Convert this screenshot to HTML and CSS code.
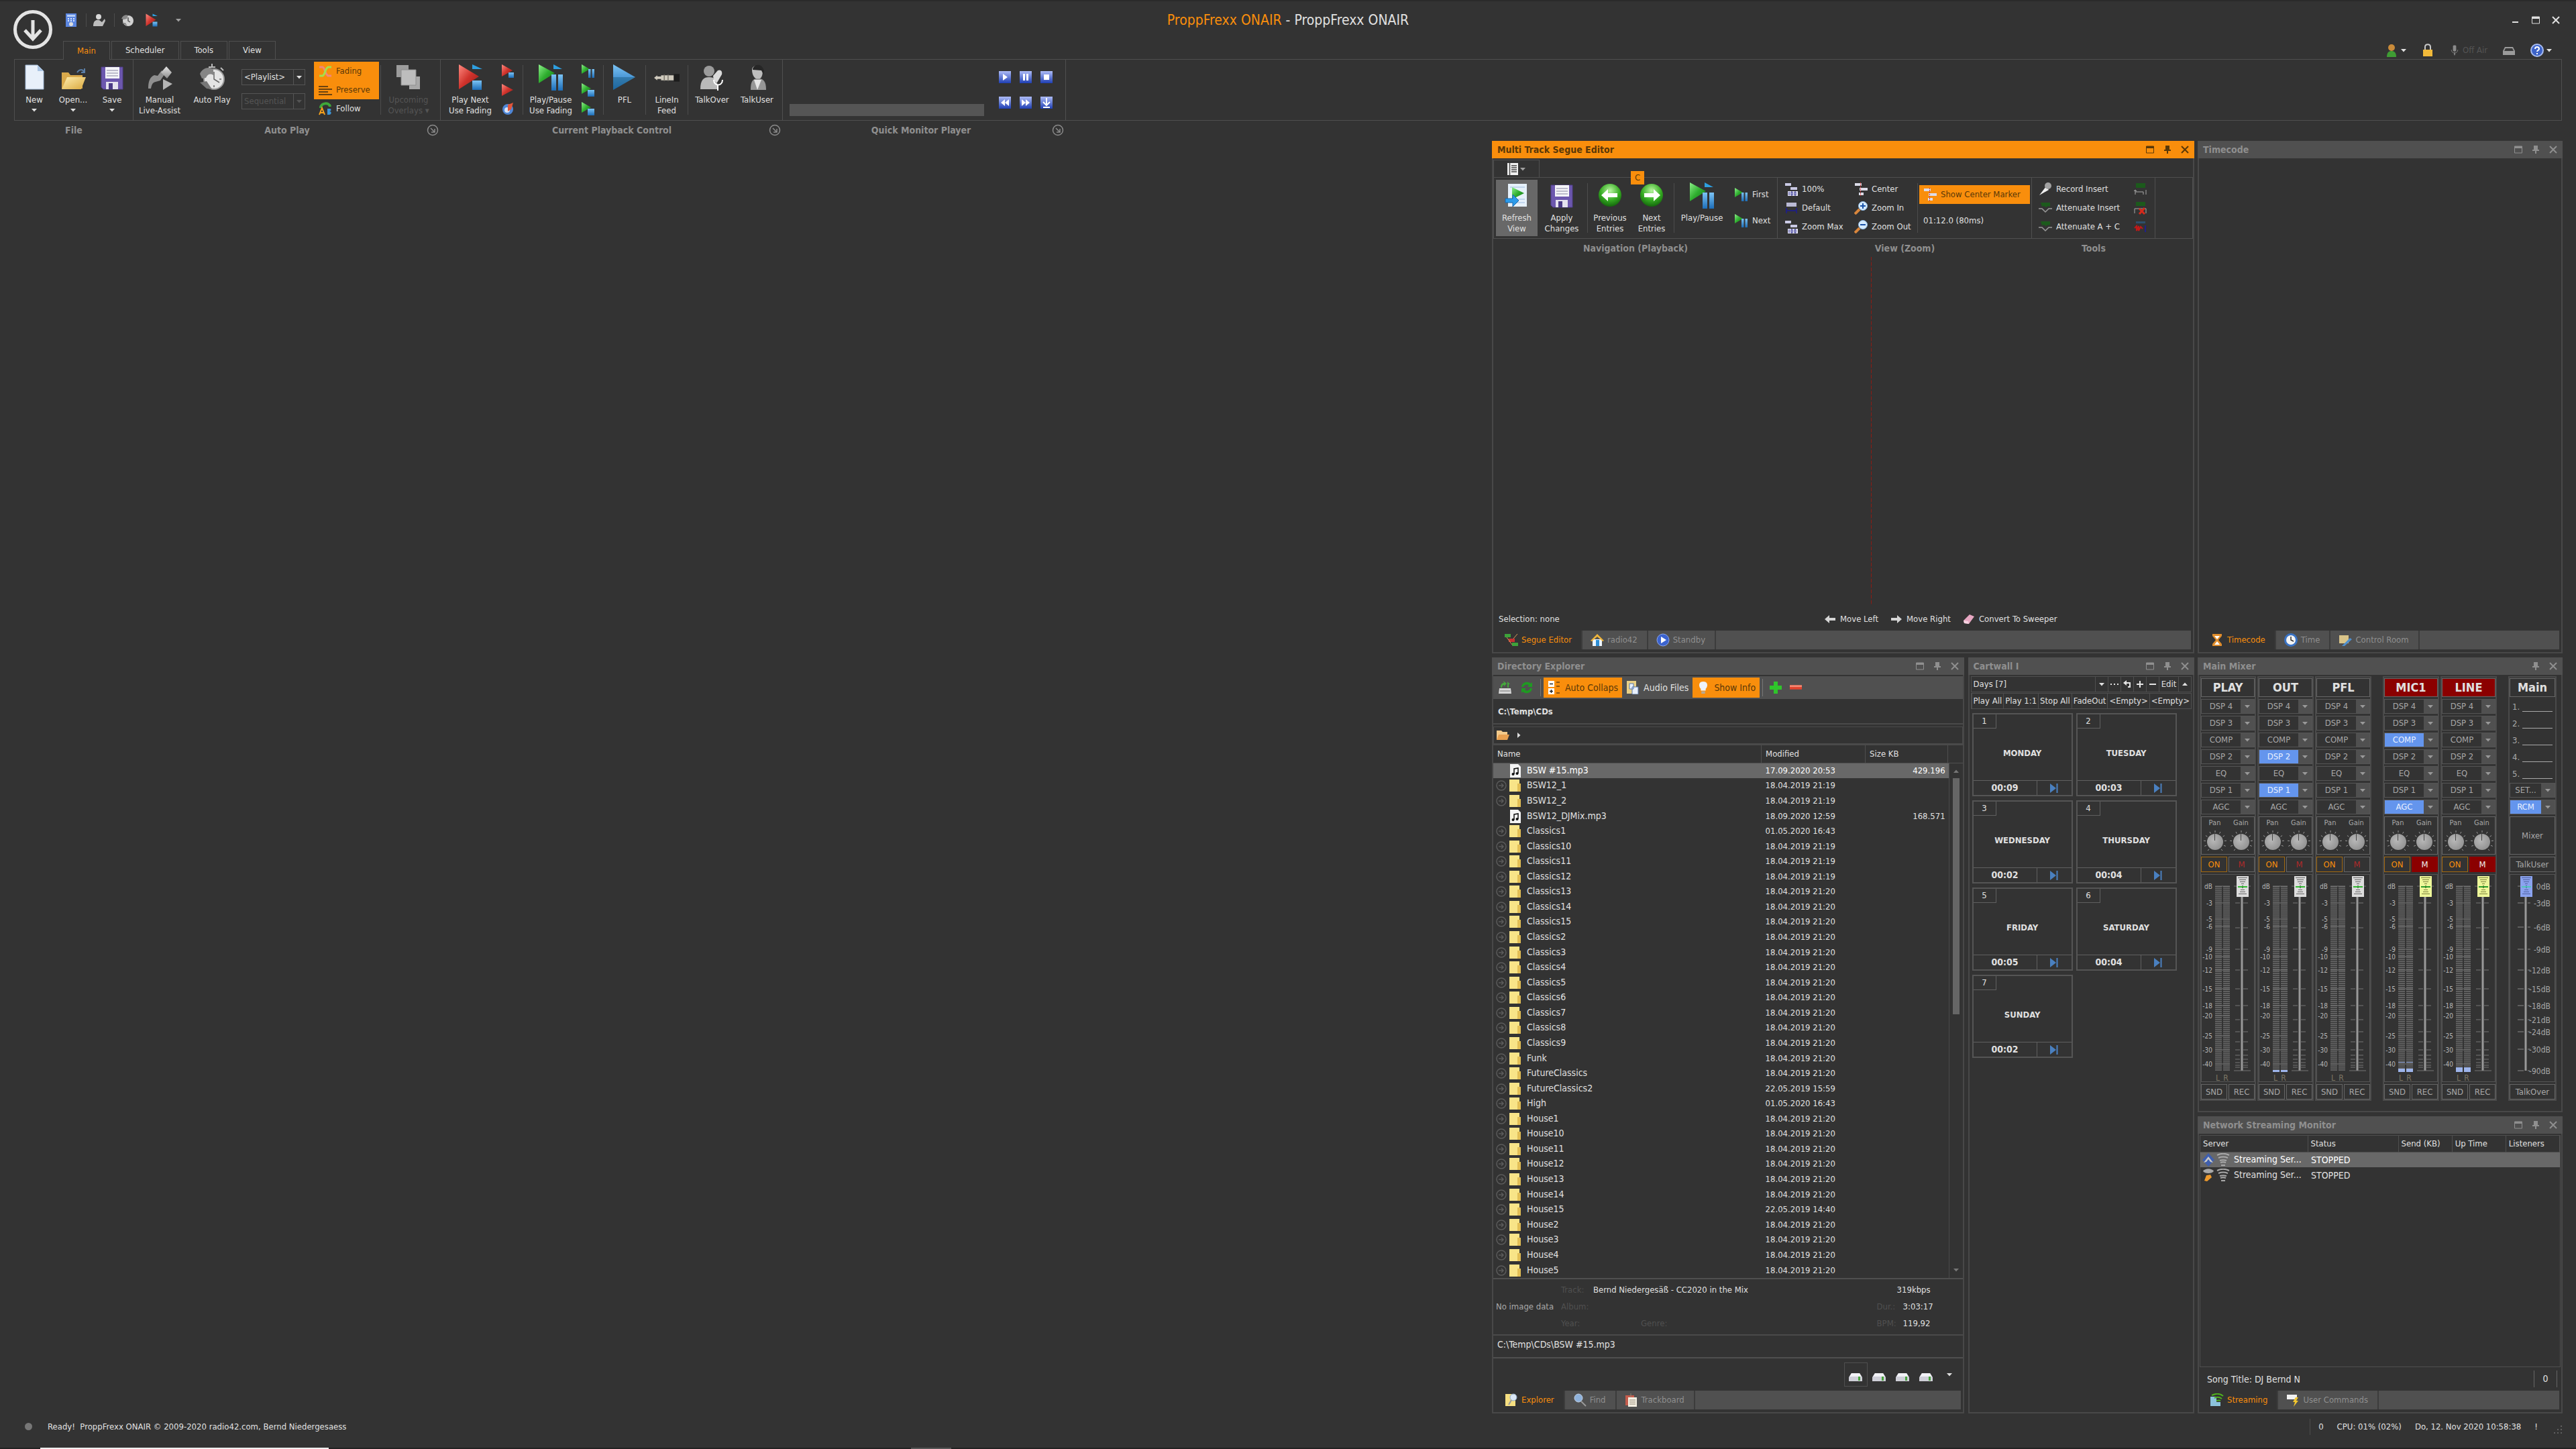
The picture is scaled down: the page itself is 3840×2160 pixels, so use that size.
FILE: index.html
```html
<!DOCTYPE html>
<html lang="en">
<head>
<meta charset="UTF-8">
<title>ProppFrexx ONAIR</title>
<link rel="stylesheet" href="styles.css">
</head>
<body>

<!-- icon sprite -->
<svg class="sprite" aria-hidden="true">
    <defs>
        <linearGradient id="gRed" x1="0" y1="0" x2="1" y2="1"><stop offset="0" stop-color="#ff8a80"/><stop offset=".5" stop-color="#d0332c"/><stop offset="1" stop-color="#8e1c18"/></linearGradient>
        <linearGradient id="gGreen" x1="0" y1="0" x2="1" y2="1"><stop offset="0" stop-color="#8df08a"/><stop offset=".5" stop-color="#2fae2f"/><stop offset="1" stop-color="#167016"/></linearGradient>
        <linearGradient id="gBlue" x1="0" y1="0" x2="0" y2="1"><stop offset="0" stop-color="#7cc4f5"/><stop offset="1" stop-color="#1c6db8"/></linearGradient>
        <linearGradient id="gGrey" x1="0" y1="0" x2="0" y2="1"><stop offset="0" stop-color="#e6e6e6"/><stop offset="1" stop-color="#8c8c8c"/></linearGradient>
        <linearGradient id="gFolder" x1="0" y1="0" x2="1" y2="1"><stop offset="0" stop-color="#ffeeb0"/><stop offset="1" stop-color="#d9a83c"/></linearGradient>
        <linearGradient id="gBtn" x1="0" y1="0" x2="0" y2="1"><stop offset="0" stop-color="#aebcf7"/><stop offset="1" stop-color="#1f3fb4"/></linearGradient>
        <radialGradient id="gBall" cx=".5" cy=".3" r=".7"><stop offset="0" stop-color="#b8f5a0"/><stop offset=".6" stop-color="#35ab22"/><stop offset="1" stop-color="#14660c"/></radialGradient>
    </defs>
    <symbol id="logo" viewBox="0 0 58 58"><circle cx="29" cy="29" r="26.5" fill="none" stroke="#e4e4e4" stroke-width="5"/><path d="M29 15v27M17 30l12 13 12-13" fill="none" stroke="#e4e4e4" stroke-width="5"/></symbol>
    <symbol id="caret" viewBox="0 0 8 8"><path d="M0 2h8L4 6.500z" fill="currentColor"/></symbol>
    <symbol id="launcher" viewBox="0 0 18 18"><circle cx="9" cy="9" r="7.500" fill="none" stroke="#8a8a8a" stroke-width="1.500"/><path d="M6 6l6 6M12 7v5H7" fill="none" stroke="#8a8a8a" stroke-width="1.500"/></symbol>
    <symbol id="new" viewBox="0 0 38 38"><path d="M6 1h18l9 9v27H6z" fill="#e8f0fa" stroke="#9fb6d3"/><path d="M24 1v9h9z" fill="#a9c3e2"/></symbol>
    <symbol id="open" viewBox="0 0 38 38"><path d="M2 12h10l3 4h18v20H2z" fill="#d9a94b"/><path d="M2 37l8-18h28l-7 18z" fill="url(#gFolder)"/><path d="M25 12c3-5 8-5 10-1M36 6v6h-5" fill="none" stroke="#5b7fa8" stroke-width="2"/></symbol>
    <symbol id="save" viewBox="0 0 38 38"><path d="M3 4h32v33H6l-3-3z" fill="#6c57ae" stroke="#51408c"/><path d="M9 4h21v17H9z" fill="#f4f4f8"/><path d="M11 9h17M11 13h17M11 17h17" stroke="#aaa9bd" stroke-width="1.500"/><path d="M10 26h18v11H10z" fill="#e4e2ee"/><path d="M14 28h6v9h-6z" fill="#4a3a86"/></symbol>
    <symbol id="manual" viewBox="0 0 38 38"><path d="M2 36c0-10 2-17 9-20l5 1 6-8 4 6-6 9-7 2c-5 1-6 5-7 10z" fill="#8f8f8f"/><path d="M29 3l8 9-7 9-9-9z" fill="url(#gGrey)"/><path d="M24 22l14 7-14 9z" fill="#b4b4b4"/></symbol>
    <symbol id="auto" viewBox="0 0 38 40"><path d="M19 0v6M14 5h10M32 6l4 4" stroke="#bbb" stroke-width="2"/><circle cx="22" cy="23" r="15" fill="#e4e4e4" stroke="#999" stroke-width="2"/><path d="M22 12v11l8 5M22 35v-3M33 23h-3" fill="none" stroke="#666" stroke-width="1.500"/><path d="M1 15C5 6 14 4 21 8v9c-5-3-9-1-11 4l-6 1z" fill="#858585"/><path d="M1 28l10-2 8 12-8-1z" fill="#777"/></symbol>
    <symbol id="fade" viewBox="0 0 20 20"><path d="M1 4h5c4 2 3 10 8 13h5" fill="none" stroke="#f2867c" stroke-width="3"/><path d="M1 17h5c4-2 3-10 8-13h5" fill="none" stroke="#a6e04a" stroke-width="3"/></symbol>
    <symbol id="lines" viewBox="0 0 20 20"><path d="M0 5h14M0 9h20M0 13h14M0 17h20" stroke="#6b4310" stroke-width="2"/></symbol>
    <symbol id="follow" viewBox="0 0 20 20"><path d="M3 9c0-8 13-9 14-2" fill="none" stroke="#3ea83a" stroke-width="4"/><path d="M1 19l4-10 4 10M2 16h6" fill="none" stroke="#f6a11c" stroke-width="2"/><path d="M13 10h4c3 1 1 4-1 4 4 0 3 5 0 5h-3z" fill="#3d95d8"/></symbol>
    <symbol id="overlays" viewBox="0 0 38 38"><path d="M20 18h16v19H20z" fill="#a8a8a8"/><path d="M1 1h18v18H1z" fill="#9c9c9c"/><path d="M8 8h22v23H8z" fill="#bdbdbd" stroke="#8d8d8d"/></symbol>
    <symbol id="playnext" viewBox="0 0 38 40"><path d="M2 1l30 18L2 38z" fill="url(#gRed)"/><path d="M22 1l15 7H22z" fill="#2e9fe0"/><path d="M22 25h14v14H22z" fill="url(#gBlue)"/></symbol>
    <symbol id="redplay" viewBox="0 0 20 20"><path d="M1 1l17 9-17 9z" fill="url(#gRed)"/></symbol>
    <symbol id="redstop" viewBox="0 0 20 20"><path d="M1 0l16 9L1 18z" fill="url(#gRed)"/><path d="M11 12h8v8h-8z" fill="url(#gBlue)"/></symbol>
    <symbol id="eject" viewBox="0 0 20 20"><circle cx="10" cy="11" r="8" fill="#4f86d6"/><circle cx="9" cy="12" r="4" fill="#d8e6fa"/><path d="M10 4l8-3-3 10-5 3z" fill="#e2553a"/></symbol>
    <symbol id="playpause" viewBox="0 0 38 40"><path d="M1 1l24 13L1 29z" fill="url(#gGreen)"/><path d="M23 1l13 7H23z" fill="#2e9fe0"/><path d="M20 16h7v24h-7zM30 16h7v24h-7z" fill="url(#gBlue)"/></symbol>
    <symbol id="gpause" viewBox="0 0 20 20"><path d="M0 0l12 7L0 14z" fill="url(#gGreen)"/><path d="M10 7h3.500v13H10zM15.500 7H19v13h-3.500z" fill="url(#gBlue)"/></symbol>
    <symbol id="gstop" viewBox="0 0 20 20"><path d="M0 0l14 8L0 16z" fill="url(#gGreen)"/><path d="M9 10h10v10H9z" fill="url(#gBlue)"/></symbol>
    <symbol id="pfl" viewBox="0 0 38 40"><path d="M2 1l33 19L2 39z" fill="url(#gBlue)"/><path d="M2 20h33L2 39z" fill="#1e5f86" opacity=".5"/></symbol>
    <symbol id="jack" viewBox="0 0 40 38"><path d="M0 20l5-4v2h6v-2h20v8H11v-2H5v2z" fill="#cfcabd"/><path d="M16 15v10M22 15v10" stroke="#77736a" stroke-width="1.500"/><path d="M31 14h9v12h-9z" fill="#1c1c1c"/></symbol>
    <symbol id="talkover" viewBox="0 0 38 40"><circle cx="14" cy="11" r="8" fill="#9b9b9b"/><path d="M1 38c0-14 5-18 13-18s13 4 13 18z" fill="#b9b9b9"/><path d="M20 18l7-8c5-2 7 2 6 6l-7 12-5-3z" fill="#dadada"/><path d="M21 24c0 10 13 10 13 0M27 32v8" fill="none" stroke="#fff" stroke-width="2"/></symbol>
    <symbol id="talkuser" viewBox="0 0 38 40"><path d="M11 9c0-8 15-8 16 1 0 7-2 13-7 13s-9-6-9-14z" fill="#bdbdbd"/><path d="M12 9c0-8 14-12 17 2l-1 5-3-6z" fill="#262626"/><path d="M9 39c0-13 3-17 11-17s12 4 12 17z" fill="#969696"/><path d="M14 24l5 15 6-15z" fill="#e6e6e6"/></symbol>
    <symbol id="qplay" viewBox="0 0 18 18"><path d="M0 0h18v18H0z" fill="url(#gBtn)"/><path d="M6 4l7 5-7 5z" fill="#fff"/></symbol>
    <symbol id="qpause" viewBox="0 0 18 18"><path d="M0 0h18v18H0z" fill="url(#gBtn)"/><path d="M5 4h3v10H5zM10 4h3v10h-3z" fill="#fff"/></symbol>
    <symbol id="qstop" viewBox="0 0 18 18"><path d="M0 0h18v18H0z" fill="url(#gBtn)"/><path d="M5 5h8v8H5z" fill="#fff"/></symbol>
    <symbol id="qrew" viewBox="0 0 18 18"><path d="M0 0h18v18H0z" fill="url(#gBtn)"/><path d="M9 4v10L3 9zM15 4v10L9 9z" fill="#fff"/></symbol>
    <symbol id="qfwd" viewBox="0 0 18 18"><path d="M0 0h18v18H0z" fill="url(#gBtn)"/><path d="M3 4v10l6-5zM9 4v10l6-5z" fill="#fff"/></symbol>
    <symbol id="qdown" viewBox="0 0 18 18"><path d="M0 0h18v18H0z" fill="url(#gBtn)"/><path d="M9 2v10M4 8l5 5 5-5M4 16h10" fill="none" stroke="#fff" stroke-width="2"/></symbol>
    <symbol id="calc" viewBox="0 0 20 20"><path d="M2 0h16v20H2z" fill="#5b86e0"/><path d="M4 2h12v3H4z" fill="#b5cdf6"/><path d="M5 8h10M5 11h10" stroke="#dce8ff" stroke-width="2" stroke-dasharray="2 2"/><circle cx="10" cy="16" r="3" fill="#ddd"/></symbol>
    <symbol id="person" viewBox="0 0 20 20"><circle cx="9" cy="5" r="4" fill="#d8d8d8"/><path d="M1 19c0-8 4-10 9-9l4 3 4-5 1 3-4 8z" fill="#bdbdbd"/></symbol>
    <symbol id="clockauto" viewBox="0 0 20 20"><circle cx="11" cy="11" r="8" fill="#d2d2d2"/><path d="M11 6v5l3 2" fill="none" stroke="#555" stroke-width="1.500"/><path d="M1 8c2-5 6-7 10-5l-2 5-4 1zM2 14l5 0 3 5z" fill="#8a8a8a"/></symbol>
    <symbol id="max" viewBox="0 0 12 12"><path d="M.5 1h11v10H.5z" fill="none" stroke="currentColor"/><path d="M0 1h12v3H0z" fill="currentColor"/></symbol>
    <symbol id="min" viewBox="0 0 12 12"><path d="M1 8h9v2H1z" fill="currentColor"/></symbol>
    <symbol id="pin" viewBox="0 0 12 12"><path d="M3 0h6v6h2v2H1V6h2zM5 8h2v4H5z" fill="currentColor"/></symbol>
    <symbol id="close" viewBox="0 0 12 12"><path d="M1 1l10 10M11 1L1 11" stroke="currentColor" stroke-width="2"/></symbol>
    <symbol id="user" viewBox="0 0 20 20"><circle cx="10" cy="6" r="5" fill="#c98b3a"/><path d="M3 20c0-7 3-9 7-9s7 2 7 9z" fill="#3f9c34"/></symbol>
    <symbol id="lock" viewBox="0 0 20 20"><path d="M6 9V5c0-5 8-5 8 0v4" fill="none" stroke="#c9c9c9" stroke-width="2"/><path d="M3 9h14v10H3z" fill="#f1b93a"/></symbol>
    <symbol id="mic" viewBox="0 0 20 20"><path d="M7 2c0-2 6-2 6 0v8c0 3-6 3-6 0zM9 14h2v5H9z" fill="#8b8b8b"/><path d="M4 9c0 8 12 8 12 0" fill="none" stroke="#8b8b8b"/></symbol>
    <symbol id="car" viewBox="0 0 20 20"><path d="M4 5h12l3 6v6H1v-6z" fill="#9a9a9a"/><path d="M5 7h10l2 4H3z" fill="#3a3a3a"/></symbol>
    <symbol id="help" viewBox="0 0 20 20"><circle cx="10" cy="10" r="9" fill="#3d63c8" stroke="#a9bdf0" stroke-width="2"/><path d="M7 8c0-4 6-4 6 0 0 2-3 2-3 4M10 14v2" fill="none" stroke="#fff" stroke-width="2"/></symbol>
    <symbol id="menu" viewBox="0 0 16 18"><path d="M0 0h16v18H0z" fill="#f0f0f0"/><path d="M3.500 0v18M6 4h8M6 7h8M6 10h8M6 13h8" stroke="#444" stroke-width="1.500"/></symbol>
    <symbol id="refreshview" viewBox="0 0 38 38"><path d="M6 2h28v34H6z" fill="#e6f1fb"/><path d="M9 7h22M9 25h22M9 30h22" stroke="#9dbbe0"/><path d="M12 7l18 9-18 9z" fill="url(#gGreen)"/><path d="M2 24h11v-6l9 9-9 9v-6H2z" fill="#2c9bea" stroke="#1767ac"/></symbol>
    <symbol id="prev" viewBox="0 0 38 38"><circle cx="19" cy="19" r="17" fill="url(#gBall)"/><path d="M6 19l10-9v6h14v6H16v6z" fill="#fff"/></symbol>
    <symbol id="next" viewBox="0 0 38 38"><circle cx="19" cy="19" r="17" fill="url(#gBall)"/><path d="M32 19l-10-9v6H8v6h14v6z" fill="#fff"/></symbol>
    <symbol id="z100" viewBox="0 0 20 20"><path d="M1 1h9v4H1zM9 7h10v4H9z" fill="#c9c9e4"/><path d="M5 13h15v7H5z" fill="#e5e5f5"/><path d="M7 14v5M10 14v5h2v-5zM15 14v5h2v-5z" fill="none" stroke="#26268a"/></symbol>
    <symbol id="zdef" viewBox="0 0 20 20"><path d="M3 2h15v6H3z" fill="#b9b9d4"/><path d="M3 10v8M18 10v8M3 14h15" stroke="#20207c" stroke-width="2"/></symbol>
    <symbol id="center" viewBox="0 0 20 20"><path d="M1 1h10v4H1zM8 8h12v4H8zM7 15h7v4H7z" fill="#dcdce8"/><path d="M9.500 0v20" stroke="#d13a3a" stroke-dasharray="2 1"/></symbol>
    <symbol id="zin" viewBox="0 0 20 20"><path d="M1 19l7-7" stroke="#d9863c" stroke-width="4"/><circle cx="13" cy="7" r="6.500" fill="#d5ebff" stroke="#8fb8e2"/><path d="M9 7h8M13 3v8" stroke="#1952a8" stroke-width="2"/></symbol>
    <symbol id="zout" viewBox="0 0 20 20"><path d="M1 19l7-7" stroke="#d9863c" stroke-width="4"/><circle cx="13" cy="7" r="6.500" fill="#d5ebff" stroke="#8fb8e2"/><path d="M9 7h8" stroke="#1952a8" stroke-width="2"/></symbol>
    <symbol id="record" viewBox="0 0 20 20"><path d="M1 19l10-13 4 5z" fill="#f0f0f0"/><circle cx="14" cy="5" r="5" fill="#a2a2a2"/></symbol>
    <symbol id="atten" viewBox="0 0 20 20"><path d="M3 2h14v6l-3-1-3 2-3-2-3 1z" fill="#1c5a1c"/><path d="M0 11h5l5 5 5-5h5" fill="none" stroke="#9a9a9a" stroke-width="1.500"/></symbol>
    <symbol id="ins1" viewBox="0 0 20 20"><path d="M3 1h14v7H3z" fill="#1c5a1c"/><path d="M2 18v-7M0 13l2-2 2 2M2 14h12v4M18 18v-7" fill="none" stroke="#aaa"/></symbol>
    <symbol id="ins2" viewBox="0 0 20 20"><path d="M3 1h14v6H3z" fill="#1c5a1c"/><path d="M1 18v-7h17v7" fill="none" stroke="#aaa"/><path d="M8 11l8 8M16 10l-8 9" stroke="#d62a1c" stroke-width="3"/></symbol>
    <symbol id="ins3" viewBox="0 0 20 20"><path d="M3 2h14v3H3z" fill="#2d4f6c"/><path d="M1 12l3-3v7l3-7v7l3-6 3 3" fill="none" stroke="#c01818" stroke-width="2"/><path d="M17 8v10" stroke="#20208a" stroke-width="2"/></symbol>
    <symbol id="aleft" viewBox="0 0 18 18"><path d="M1 9l7-6v4h9v4H8v4z" fill="#d6d6d6"/></symbol>
    <symbol id="aright" viewBox="0 0 18 18"><path d="M17 9l-7-6v4H1v4h9v4z" fill="#d6d6d6"/></symbol>
    <symbol id="eraser" viewBox="0 0 18 18"><path d="M1 11l9-9 7 3-8 11-7-1z" fill="#e7a7c2"/><path d="M1 11l7 1 1 4-7-1z" fill="#f6d3e1"/></symbol>
    <symbol id="segue" viewBox="0 0 20 20"><path d="M0 1h9v5H0zM11 14h9v5h-9z" fill="#3da23a"/><path d="M6 8h9v5H6z" fill="#c53232"/><path d="M3 6l8 11M19 1l-6 7" stroke="#d69a5a"/></symbol>
    <symbol id="home" viewBox="0 0 20 20"><path d="M3 9h14v10H3z" fill="#eef6ff"/><path d="M0 11L10 1l10 10-2 1-8-7-8 7z" fill="#f0b53a"/><path d="M8 10h5v9H8z" fill="#2e8fd6"/></symbol>
    <symbol id="standby" viewBox="0 0 20 20"><circle cx="10" cy="10" r="9" fill="#3b63cf" stroke="#8ca6ea"/><path d="M7 5l8 5-8 5z" fill="#fff"/></symbol>
    <symbol id="timer" viewBox="0 0 20 20"><circle cx="10" cy="10" r="8.500" fill="#f4f4f4" stroke="#3a73c4" stroke-width="3"/><path d="M10 5v5l4 2" fill="none" stroke="#333" stroke-width="1.500"/></symbol>
    <symbol id="glass" viewBox="0 0 20 20"><path d="M3 1h14v3l-5 6 5 6v3H3v-3l5-6-5-6z" fill="#e08d2c"/><path d="M6 4h8l-4 5zM10 12l4 5H6z" fill="#fff"/></symbol>
    <symbol id="control" viewBox="0 0 20 20"><path d="M1 3h14v12H1z" fill="#d9c489"/><path d="M5 19L17 7l3 2L9 19z" fill="#4e8fd0"/></symbol>
    <symbol id="driveref" viewBox="0 0 20 20"><path d="M1 11h17l1 8H0z" fill="#d6d6d6"/><path d="M2 15h15" stroke="#777"/><path d="M3 10c0-5 2-7 5-7l-1-3 5 4-4 4V6c-2 0-3 2-3 4zM13 10V1l4 4h-2v5z" fill="#44a83c"/></symbol>
    <symbol id="sync" viewBox="0 0 20 20"><path d="M2 9c1-8 10-9 14-5l2-2v7h-7l2-2c-3-3-7-1-8 2zM18 11c-1 8-10 9-14 5l-2 2v-7h7l-2 2c3 3 7 1 8-2z" fill="#1f9a22"/></symbol>
    <symbol id="tree" viewBox="0 0 18 20"><path d="M0 0h9v9H0zM0 11h9v9H0z" fill="#fff"/><path d="M2 4.500h5M2 15.500h5M4.500 13v5" stroke="#222" stroke-width="1.500"/><path d="M12 2h5M12 8h5M12 18h5" stroke="#6b4310" stroke-width="1.500"/></symbol>
    <symbol id="audiofile" viewBox="0 0 20 20"><path d="M1 0h14v19H1z" fill="#e8cf86"/><path d="M5 4h6v8H5zM9 9h9v11H9z" fill="#e9f0fb" stroke="#5577ad"/></symbol>
    <symbol id="bulb" viewBox="0 0 16 22"><path d="M8 1c8 0 8 8 4 12v3H4v-3C0 9 0 1 8 1z" fill="#eef2fa"/><path d="M5 17h6v4H5z" fill="#b9a992"/></symbol>
    <symbol id="plus" viewBox="0 0 18 18"><path d="M6 0h6v6h6v6h-6v6H6v-6H0V6h6z" fill="#2fc52b"/></symbol>
    <symbol id="minus" viewBox="0 0 20 18"><path d="M0 5h20v7H0z" fill="#e0432e"/><path d="M0 5h20v3H0z" fill="#f38a75"/></symbol>
    <symbol id="crumb" viewBox="0 0 20 16"><path d="M1 1h7l2 2h7v12H1z" fill="#f2c98a"/><path d="M1 15l3-8h16l-3 8z" fill="#e8a050"/></symbol>
    <symbol id="folder" viewBox="0 0 18 20"><path d="M0 1h15v18H0z" fill="#f8e488"/><path d="M12 7h5v12h-5z" fill="#e2be55"/></symbol>
    <symbol id="file" viewBox="0 0 18 20"><path d="M1 0h12l4 4v16H1z" fill="#f4f4f4"/><path d="M7 15V7l6-1v8" fill="none" stroke="#111" stroke-width="1.500"/><circle cx="5.500" cy="15" r="2" fill="#111"/><circle cx="11.500" cy="14" r="2" fill="#111"/></symbol>
    <symbol id="expand" viewBox="0 0 16 16"><circle cx="8" cy="8" r="7" fill="none" stroke="#5b5b5b" stroke-width="1.500"/><path d="M4 8h7M8 5l3 3-3 3" fill="none" stroke="#5b5b5b" stroke-width="1.500"/></symbol>
    <symbol id="drive" viewBox="0 0 20 14"><path d="M4 1h12l4 6v6H0V7z" fill="#cfcfd8"/><path d="M4 1h12l3 5H1z" fill="#f2f2f6"/><path d="M14 6h3v6h-3z" fill="#47a33c"/></symbol>
    <symbol id="explorer" viewBox="0 0 18 20"><path d="M0 1h15v18H0z" fill="#f6df80"/><circle cx="12" cy="6" r="5" fill="#dbe8f6" stroke="#8fa8c4"/><path d="M9 10l-4 7" stroke="#9a9a9a" stroke-width="2"/></symbol>
    <symbol id="find" viewBox="0 0 20 20"><circle cx="8" cy="7" r="6" fill="#8fb2dc" stroke="#c4d2e4"/><path d="M12 12l7 7" stroke="#999" stroke-width="2"/></symbol>
    <symbol id="board" viewBox="0 0 18 20"><path d="M0 3h13v15H0z" fill="#c45c4c"/><path d="M4 6h13v14H4z" fill="#f4efe2"/><path d="M6 10h9M6 13h9M6 16h9M8 0v6" stroke="#8d8271"/></symbol>
    <symbol id="stream" viewBox="0 0 20 20"><path d="M0 5h9v14H0zM9 13h6v6H9z" fill="#8cc3dc"/><path d="M2 3c6-3 12-3 17 1M6 7c4-2 7-2 11 1M9 11c3-1 4-1 6 0" fill="none" stroke="#4eb01e" stroke-width="2"/></symbol>
    <symbol id="command" viewBox="0 0 18 20"><path d="M0 2h15v7H0z" fill="#f1f1f1"/><path d="M13 6l4 0-3 5h3l-7 9 2-7H9z" fill="#f2c62e"/></symbol>
    <symbol id="skip" viewBox="0 0 12 14"><path d="M0 0l9 7-9 7z" fill="#4a80c0"/><path d="M9.500 0h2v14h-2z" fill="#4a80c0"/></symbol>
    <symbol id="undo" viewBox="0 0 12 12"><path d="M5 0L0 4l5 4V5h4v4H7v2h4V3H5z" fill="#e4e4e4"/></symbol>
    <symbol id="dots" viewBox="0 0 12 12"><path d="M0 5h2v2H0zM5 5h2v2H5zM10 5h2v2h-2z" fill="#e4e4e4"/></symbol>
    <symbol id="add" viewBox="0 0 12 12"><path d="M5 1h2v4h4v2H7v4H5V7H1V5h4z" fill="#e4e4e4"/></symbol>
    <symbol id="sub" viewBox="0 0 12 12"><path d="M1 5h10v2H1z" fill="#e4e4e4"/></symbol>
    <symbol id="srvA" viewBox="0 0 18 20"><path d="M9 0l9 10-9 10-9-10z" fill="#3f5fae"/><path d="M2 14l7-9 7 9-4-1-3-4-3 4z" fill="#c9c9c9"/></symbol>
    <symbol id="srvB" viewBox="0 0 18 20"><path d="M1 4c3-5 13-5 16 0-3 4-13 4-16 0z" fill="#a8a8a8"/><path d="M6 10l6-1 2 4-7 6-4-1z" fill="#ee9a2c"/></symbol>
    <symbol id="wifi" viewBox="0 0 20 20"><path d="M1 3c6-3 12-3 18 0M3 7c5-2 9-2 14 0M5 11c3-1 7-1 10 0M6 14c3-1 5-1 8 0M7 18h6" fill="none" stroke="#a9a9a9" stroke-width="2"/></symbol>
    <symbol id="grip" viewBox="0 0 14 14"><path d="M11 1h2v2h-2zM11 6h2v2h-2zM6 6h2v2H6zM11 11h2v2h-2zM6 11h2v2H6zM1 11h2v2H1z" fill="#606060"/></symbol>
</svg>

<header class="titlebar">
    <button class="app-btn" aria-label="Application menu"><svg class="logo"><use href="#logo"/></svg></button>
    <div class="titlebar-main">
        <div class="title-row">
            <div class="qat">
                <button aria-label="Mixer"><svg class="i20"><use href="#calc"/></svg></button>
                <button aria-label="User"><svg class="i20"><use href="#person"/></svg></button>
                <button aria-label="Auto play"><svg class="i20"><use href="#clockauto"/></svg></button>
                <button aria-label="Play next"><svg class="i20"><use href="#playnext"/></svg></button>
                <button aria-label="Customize"><svg class="i8"><use href="#caret"/></svg></button>
            </div>
            <h1 class="title"><span>ProppFrexx ONAIR</span> - ProppFrexx ONAIR</h1>
            <div class="win-btns">
                <button aria-label="Minimize"><svg class="i12"><use href="#min"/></svg></button>
                <button aria-label="Maximize"><svg class="i12"><use href="#max"/></svg></button>
                <button aria-label="Close"><svg class="i12"><use href="#close"/></svg></button>
            </div>
        </div>
        <div class="tab-row">
            <nav class="ribbon-tabs">
                <button class="active">Main</button>
                <button>Scheduler</button>
                <button>Tools</button>
                <button>View</button>
            </nav>
            <div class="tray">
                <button aria-label="Account"><svg class="i20"><use href="#user"/></svg><svg class="i8"><use href="#caret"/></svg></button>
                <button aria-label="Lock"><svg class="i20"><use href="#lock"/></svg></button>
                <button class="off"><svg class="i16"><use href="#mic"/></svg>Off Air</button>
                <button aria-label="Drive"><svg class="i20"><use href="#car"/></svg></button>
                <button aria-label="Help"><svg class="i20"><use href="#help"/></svg><svg class="i8"><use href="#caret"/></svg></button>
            </div>
        </div>
    </div>
</header>

<section class="ribbon main-ribbon">
    <div class="group g-file">
        <div class="group-body">
            <button class="big"><svg><use href="#new"/></svg>New<svg class="i8"><use href="#caret"/></svg></button>
            <button class="big"><svg><use href="#open"/></svg>Open...<svg class="i8"><use href="#caret"/></svg></button>
            <button class="big"><svg><use href="#save"/></svg>Save<svg class="i8"><use href="#caret"/></svg></button>
        </div>
        <div class="group-label">File</div>
    </div>
    <div class="group g-auto">
        <div class="group-body">
            <button class="big wide"><svg><use href="#manual"/></svg>Manual<br>Live-Assist</button>
            <button class="big wide"><svg><use href="#auto"/></svg>Auto Play</button>
            <div class="combos">
                <div class="combo"><select aria-label="Playlist"><option>&lt;Playlist&gt;</option></select><svg class="i8"><use href="#caret"/></svg></div>
                <div class="combo off"><select aria-label="Order" disabled><option>Sequential</option></select><svg class="i8"><use href="#caret"/></svg></div>
            </div>
            <div class="stack toggles">
                <button class="on"><svg class="i20"><use href="#fade"/></svg>Fading</button>
                <button class="on"><svg class="i20"><use href="#lines"/></svg>Preserve</button>
                <button><svg class="i20"><use href="#follow"/></svg>Follow</button>
            </div>
            <i class="vsep"></i>
            <button class="big wide off" disabled><svg><use href="#overlays"/></svg>Upcoming<br>Overlays ▾</button>
        </div>
        <div class="group-label">Auto Play<svg class="launcher"><use href="#launcher"/></svg></div>
    </div>
    <div class="group g-play">
        <div class="group-body">
            <button class="big wide"><svg><use href="#playnext"/></svg>Play Next<br>Use Fading</button>
            <div class="stack icons">
                <button aria-label="Play next and stop"><svg class="i20"><use href="#redstop"/></svg></button>
                <button aria-label="Play next"><svg class="i20"><use href="#redplay"/></svg></button>
                <button aria-label="Eject"><svg class="i20"><use href="#eject"/></svg></button>
            </div>
            <i class="vsep"></i>
            <button class="big wide"><svg><use href="#playpause"/></svg>Play/Pause<br>Use Fading</button>
            <div class="stack icons">
                <button aria-label="Pause"><svg class="i20"><use href="#gpause"/></svg></button>
                <button aria-label="Fade and stop"><svg class="i20"><use href="#gstop"/></svg></button>
                <button aria-label="Stop"><svg class="i20"><use href="#gstop"/></svg></button>
            </div>
            <i class="vsep"></i>
            <button class="big"><svg><use href="#pfl"/></svg>PFL</button>
            <i class="vsep"></i>
            <button class="big"><svg><use href="#jack"/></svg>LineIn<br>Feed</button>
            <i class="vsep"></i>
            <button class="big mid"><svg><use href="#talkover"/></svg>TalkOver</button>
            <button class="big mid"><svg><use href="#talkuser"/></svg>TalkUser</button>
        </div>
        <div class="group-label">Current Playback Control<svg class="launcher"><use href="#launcher"/></svg></div>
    </div>
    <div class="group g-quick">
        <div class="group-body">
            <div class="quick-bar"></div>
            <div class="quick-btns">
                <button aria-label="Play"><svg class="i18"><use href="#qplay"/></svg></button>
                <button aria-label="Pause"><svg class="i18"><use href="#qpause"/></svg></button>
                <button aria-label="Stop"><svg class="i18"><use href="#qstop"/></svg></button>
                <button aria-label="Rewind"><svg class="i18"><use href="#qrew"/></svg></button>
                <button aria-label="Forward"><svg class="i18"><use href="#qfwd"/></svg></button>
                <button aria-label="Load"><svg class="i18"><use href="#qdown"/></svg></button>
            </div>
        </div>
        <div class="group-label">Quick Monitor Player<svg class="launcher"><use href="#launcher"/></svg></div>
    </div>
    <div class="group g-rest"><div class="group-body"></div></div>
</section>

<main class="workspace">
    <div class="dock">
        <section class="panel upper">
            <header class="panel-head active">
                <h2>Multi Track Segue Editor</h2>
                <button aria-label="Maximize"><svg class="i12"><use href="#max"/></svg></button>
                <button aria-label="Pin"><svg class="i12"><use href="#pin"/></svg></button>
                <button aria-label="Close"><svg class="i12"><use href="#close"/></svg></button>
            </header>
            <div class="segue-menu"><button aria-label="Menu"><svg class="i16"><use href="#menu"/></svg><svg class="i8"><use href="#caret"/></svg></button></div>
            <div class="ribbon">
                <div class="group g-nav">
                    <div class="group-body">
                        <button class="big pressed"><svg><use href="#refreshview"/></svg>Refresh<br>View</button>
                        <button class="big mid"><svg><use href="#save"/></svg>Apply<br>Changes</button>
                        <i class="vsep"></i>
                        <button class="big"><svg><use href="#prev"/></svg>Previous<br>Entries</button>
                        <button class="big"><svg><use href="#next"/></svg>Next<br>Entries<span class="keytip">C</span></button>
                        <i class="vsep"></i>
                        <button class="big wide"><svg><use href="#playpause"/></svg>Play/Pause</button>
                        <div class="stack two">
                            <button><svg class="i20"><use href="#gpause"/></svg>First</button>
                            <button><svg class="i20"><use href="#gpause"/></svg>Next</button>
                        </div>
                    </div>
                    <div class="group-label">Navigation (Playback)</div>
                </div>
                <div class="group g-zoom">
                    <div class="group-body">
                        <div class="stack">
                            <button><svg class="i20"><use href="#z100"/></svg>100%</button>
                            <button><svg class="i20"><use href="#zdef"/></svg>Default</button>
                            <button><svg class="i20"><use href="#z100"/></svg>Zoom Max</button>
                        </div>
                        <div class="stack">
                            <button><svg class="i20"><use href="#center"/></svg>Center</button>
                            <button><svg class="i20"><use href="#zin"/></svg>Zoom In</button>
                            <button><svg class="i20"><use href="#zout"/></svg>Zoom Out</button>
                        </div>
                        <i class="vsep"></i>
                        <div class="stack two marker">
                            <button class="on"><svg class="i20"><use href="#center"/></svg>Show Center Marker</button>
                            <span>01:12.0 (80ms)</span>
                        </div>
                    </div>
                    <div class="group-label">View (Zoom)</div>
                </div>
                <div class="group g-tools">
                    <div class="group-body">
                        <div class="stack">
                            <button><svg class="i20"><use href="#record"/></svg>Record Insert</button>
                            <button><svg class="i20"><use href="#atten"/></svg>Attenuate Insert</button>
                            <button><svg class="i20"><use href="#atten"/></svg>Attenuate A + C</button>
                        </div>
                        <div class="stack icons">
                            <button aria-label="Insert marker"><svg class="i20"><use href="#ins1"/></svg></button>
                            <button aria-label="Remove insert"><svg class="i20"><use href="#ins2"/></svg></button>
                            <button aria-label="Reset"><svg class="i20"><use href="#ins3"/></svg></button>
                        </div>
                    </div>
                    <div class="group-label">Tools</div>
                </div>
                <div class="group g-rest"><div class="group-body"></div></div>
            </div>
            <div class="wave"></div>
            <div class="segue-status">
                <span>Selection: none</span>
                <div class="segue-cmds">
                    <button><svg class="i18"><use href="#aleft"/></svg>Move Left</button>
                    <button><svg class="i18"><use href="#aright"/></svg>Move Right</button>
                    <button><svg class="i18"><use href="#eraser"/></svg>Convert To Sweeper</button>
                </div>
            </div>
            <nav class="tabs">
                <button class="active"><svg class="i20"><use href="#segue"/></svg>Segue Editor</button>
                <button><svg class="i20"><use href="#home"/></svg>radio42</button>
                <button><svg class="i20"><use href="#standby"/></svg>Standby</button>
            </nav>
        </section>

        <div class="lower">
            <section class="panel explorer">
                <header class="panel-head">
                    <h2>Directory Explorer</h2>
                    <button aria-label="Maximize"><svg class="i12"><use href="#max"/></svg></button>
                    <button aria-label="Pin"><svg class="i12"><use href="#pin"/></svg></button>
                    <button aria-label="Close"><svg class="i12"><use href="#close"/></svg></button>
                </header>
                <div class="toolbar">
                    <button aria-label="Refresh drives"><svg class="i20"><use href="#driveref"/></svg></button>
                    <button aria-label="Refresh"><svg class="i20"><use href="#sync"/></svg></button>
                    <i class="vsep"></i>
                    <button class="on"><svg class="i20"><use href="#tree"/></svg>Auto Collaps</button>
                    <button><svg class="i20"><use href="#audiofile"/></svg>Audio Files</button>
                    <button class="on"><svg class="i20"><use href="#bulb"/></svg>Show Info</button>
                    <i class="vsep"></i>
                    <button aria-label="Add"><svg class="i18"><use href="#plus"/></svg></button>
                    <button aria-label="Remove"><svg class="i18"><use href="#minus"/></svg></button>
                </div>
                <div class="path">C:\Temp\CDs</div>
                <div class="crumbs"><svg class="i20"><use href="#crumb"/></svg><svg class="i8 right"><use href="#caret"/></svg></div>
                <div class="files">
                    <table>
                        <thead><tr><th>Name</th><th>Modified</th><th>Size KB</th><th class="bar"></th></tr></thead>
                        <tbody id="fileRows"></tbody>
                    </table>
                    <div class="scroll"><svg class="i8 up"><use href="#caret"/></svg><i class="thumb"></i><svg class="i8"><use href="#caret"/></svg></div>
                </div>
                <div class="info">
                    <div class="noimg">No image data</div>
                    <dl class="tags">
                        <div><dt>Track:</dt><dd>Bernd Niedergesäß - CC2020 in the Mix</dd></div>
                        <div><dt>Album:</dt><dd></dd></div>
                        <div><dt>Year:</dt><dd class="year"></dd><dt>Genre:</dt><dd></dd></div>
                    </dl>
                    <dl class="tags nums">
                        <div><dt></dt><dd class="rate">319kbps</dd></div>
                        <div><dt>Dur.:</dt><dd>3:03:17</dd></div>
                        <div><dt>BPM:</dt><dd>119,92</dd></div>
                    </dl>
                </div>
                <div class="selected-path">C:\Temp\CDs\BSW #15.mp3</div>
                <div class="drives">
                    <button class="current" aria-label="Drive 1"><svg class="i20"><use href="#drive"/></svg></button>
                    <button aria-label="Drive 2"><svg class="i20"><use href="#drive"/></svg></button>
                    <button aria-label="Drive 3"><svg class="i20"><use href="#drive"/></svg></button>
                    <button aria-label="Drive 4"><svg class="i20"><use href="#drive"/></svg></button>
                    <button aria-label="More"><svg class="i8"><use href="#caret"/></svg></button>
                </div>
                <nav class="tabs">
                    <button class="active"><svg class="i20"><use href="#explorer"/></svg>Explorer</button>
                    <button><svg class="i20"><use href="#find"/></svg>Find</button>
                    <button><svg class="i20"><use href="#board"/></svg>Trackboard</button>
                </nav>
            </section>

            <section class="panel cartwall">
                <header class="panel-head">
                    <h2>Cartwall I</h2>
                    <button aria-label="Maximize"><svg class="i12"><use href="#max"/></svg></button>
                    <button aria-label="Pin"><svg class="i12"><use href="#pin"/></svg></button>
                    <button aria-label="Close"><svg class="i12"><use href="#close"/></svg></button>
                </header>
                <div class="cart-bar">
                    <span class="cart-name">Days [7]</span>
                    <button aria-label="Select"><svg class="i8"><use href="#caret"/></svg></button>
                    <button aria-label="Browse"><svg class="i12"><use href="#dots"/></svg></button>
                    <button aria-label="Undo"><svg class="i12"><use href="#undo"/></svg></button>
                    <button aria-label="Add"><svg class="i12"><use href="#add"/></svg></button>
                    <button aria-label="Remove"><svg class="i12"><use href="#sub"/></svg></button>
                    <button class="edit">Edit</button>
                    <button aria-label="Collapse"><svg class="i8 up"><use href="#caret"/></svg></button>
                </div>
                <div class="cart-bar cmds">
                    <button>Play All</button><button>Play 1:1</button><button>Stop All</button><button>FadeOut</button><button>&lt;Empty&gt;</button><button>&lt;Empty&gt;</button>
                </div>
                <div class="carts" id="carts"></div>
            </section>
        </div>
    </div>

    <div class="side">
        <section class="panel upper">
            <header class="panel-head">
                <h2>Timecode</h2>
                <button aria-label="Maximize"><svg class="i12"><use href="#max"/></svg></button>
                <button aria-label="Pin"><svg class="i12"><use href="#pin"/></svg></button>
                <button aria-label="Close"><svg class="i12"><use href="#close"/></svg></button>
            </header>
            <div class="fill"></div>
            <nav class="tabs">
                <button class="active"><svg class="i20"><use href="#glass"/></svg>Timecode</button>
                <button><svg class="i20"><use href="#timer"/></svg>Time</button>
                <button><svg class="i20"><use href="#control"/></svg>Control Room</button>
            </nav>
        </section>

        <section class="panel mixer">
            <header class="panel-head">
                <h2>Main Mixer</h2>
                <button aria-label="Pin"><svg class="i12"><use href="#pin"/></svg></button>
                <button aria-label="Close"><svg class="i12"><use href="#close"/></svg></button>
            </header>
            <div class="strips" id="strips"></div>
        </section>

        <section class="panel network">
            <header class="panel-head">
                <h2>Network Streaming Monitor</h2>
                <button aria-label="Maximize"><svg class="i12"><use href="#max"/></svg></button>
                <button aria-label="Pin"><svg class="i12"><use href="#pin"/></svg></button>
                <button aria-label="Close"><svg class="i12"><use href="#close"/></svg></button>
            </header>
            <div class="servers">
                <table>
                    <thead><tr><th>Server</th><th>Status</th><th>Send (KB)</th><th>Up Time</th><th>Listeners</th></tr></thead>
                    <tbody>
                        <tr class="selected"><td><svg class="i20"><use href="#srvA"/></svg><svg class="i20"><use href="#wifi"/></svg>Streaming Ser...</td><td>STOPPED</td><td></td><td></td><td></td></tr>
                        <tr><td><svg class="i20"><use href="#srvB"/></svg><svg class="i20"><use href="#wifi"/></svg>Streaming Ser...</td><td>STOPPED</td><td></td><td></td><td></td></tr>
                    </tbody>
                </table>
            </div>
            <div class="song"><span>Song Title: DJ Bernd N</span><span class="count">0</span></div>
            <nav class="tabs">
                <button class="active"><svg class="i20"><use href="#stream"/></svg>Streaming</button>
                <button><svg class="i20"><use href="#command"/></svg>User Commands</button>
            </nav>
        </section>
    </div>
</main>

<footer class="status">
    <i class="led"></i>
    <span class="ready">Ready!&nbsp; ProppFrexx ONAIR © 2009-2020 radio42.com, Bernd Niedergesaess</span>
    <i class="vsep"></i>
    <span>0</span>
    <span>CPU: 01% (02%)</span>
    <span>Do, 12. Nov 2020 10:58:38</span>
    <span>!</span>
    <svg class="grip"><use href="#grip"/></svg>
</footer>
<div class="taskbar"><i class="task"></i><i class="task dim"></i></div>

<script src="script.js"></script>
</body>
</html>
```
FILE: styles.css
```css
* {
    box-sizing: border-box;
}
body {
    margin: 0;
    min-height: 100vh;
    display: flex;
    flex-direction: column;
    background: #333;
    color: #e0e0e0;
    font-family: "DejaVu Sans Condensed", "DejaVu Sans", sans-serif;
    font-size: 13px;
    line-height: 16px;
    border-top: 2px solid #2a2a2a;
}
button, select, input {
    font: inherit;
    color: inherit;
    margin: 0;
}
button {
    background: none;
    border: none;
    padding: 0;
    white-space: nowrap;
}
svg {
    display: block;
    flex: none;
}
h1, h2, dl, dd {
    margin: 0;
}
.sprite { position: absolute; width: 0; height: 0; }
.i8 { width: 8px; height: 8px; }
.i12 { width: 12px; height: 12px; }
.i16 { width: 16px; height: 18px; }
.i18 { width: 18px; height: 18px; }
.i20 { width: 20px; height: 20px; }
.up { transform: rotate(180deg); }
.right { transform: rotate(-90deg); }
.vsep {
    width: 1px;
    margin: 8px 2px;
    background: #4c4c4c;
    flex: none;
}

/* title bar */
.titlebar {
    display: flex;
    height: 86px;
    padding: 0 20px;
}
.app-btn { align-self: flex-start; margin-top: 13px; width: 74px; }
.logo { width: 58px; height: 58px; }
.titlebar-main {
    flex: 1;
    display: flex;
    flex-direction: column;
    justify-content: space-between;
}
.title-row {
    display: grid;
    grid-template-columns: 1fr auto 1fr;
    align-items: center;
    height: 56px;
    margin-left: -74px;
}
.qat {
    display: flex;
    align-items: center;
    gap: 16px;
    margin-left: 76px;
}
.qat button:nth-child(-n+2) {
    padding-right: 12px;
    border-right: 1px solid #4c4c4c;
    margin-right: -7px;
}
.qat button:last-child { margin-left: 10px; color: #a0a0a0; }
.title {
    font-size: 21px;
    line-height: 24px;
    font-weight: normal;
}
.title span { color: #f98e0c; }
.win-btns {
    display: flex;
    justify-content: flex-end;
    gap: 18px;
    padding-right: 4px;
}
.tab-row {
    display: flex;
    justify-content: space-between;
}
.ribbon-tabs {
    display: flex;
    gap: 2px;
}
.ribbon-tabs button {
    height: 27px;
    padding: 0 20px;
    border: 1px solid #4f4f4f;
    border-bottom: none;
}
.ribbon-tabs .active {
    color: #f98e0c;
    background: #333;
    height: 28px;
    margin-bottom: -1px;
    z-index: 1;
}
.tray {
    display: flex;
    align-items: center;
    gap: 22px;
    padding-right: 16px;
}
.tray button { display: flex; align-items: center; gap: 4px; }
.off { color: #555; }

/* ribbons */
.ribbon { display: flex; }
.main-ribbon { margin: 0 21px; }
.group { display: flex; flex-direction: column; }
.group-body {
    display: flex;
    height: 92px;
    border: 1px solid #4f4f4f;
    border-left: none;
}
.group:first-child .group-body { border-left: 1px solid #4f4f4f; }
.group-label {
    display: flex;
    align-items: center;
    justify-content: center;
    height: 27px;
    color: #8f8f8f;
    font-size: 14px;
    font-weight: bold;
    position: relative;
}
.launcher {
    position: absolute;
    right: 3px;
    width: 18px;
    height: 18px;
}
.g-file { width: 178px; }
.g-auto { width: 458px; }
.g-play { width: 510px; }
.g-quick { width: 422px; }
.g-nav { width: 424px; }
.g-zoom { width: 379px; }
.g-tools { width: 184px; }
.g-rest { flex: 1; }
.big {
    display: flex;
    flex-direction: column;
    align-items: center;
    align-self: stretch;
    width: 60px;
    padding-top: 6px;
    text-align: center;
    position: relative;
}
.big > svg:first-child {
    width: 38px;
    height: 40px;
    margin-bottom: 6px;
}
.big .i8 { margin-top: 3px; }
.g-file .big { width: 58px; }
.g-play .big { width: 58px; }
.g-nav .big { width: 62px; }
.g-play .group-body { padding-left: 5px; }
.ribbon .big.wide { width: 78px; }
.ribbon .big.mid { width: 67px; }
.g-nav .big.mid { width: 72px; }
.big.pressed { background: #686868; margin: 3px; margin-right: 0; padding-top: 3px; }
.keytip {
    position: absolute;
    left: 0;
    top: -10px;
    width: 20px;
    line-height: 20px;
    background: #f98e0c;
    color: #5a3808;
}
.combos {
    display: flex;
    flex-direction: column;
    gap: 12px;
    padding: 14px 13px 0 5px;
}
.combo {
    display: flex;
    align-items: center;
    width: 95px;
    height: 24px;
    border: 1px solid #555;
}
.combo select {
    appearance: none;
    width: 77px;
    height: 22px;
    padding: 0 3px;
    border: none;
    border-right: 1px solid #555;
    background: none;
    opacity: 1;
}
.combo .i8 { margin-left: 4px; }
.stack {
    display: flex;
    flex-direction: column;
    padding-top: 3px;
}
.stack > * {
    display: flex;
    align-items: center;
    gap: 6px;
    height: 28px;
    padding: 0 7px;
}
.toggles { width: 97px; }
.on { background: #f98e0c; color: #5a3808; }
.icons > * { width: 37px; }
.two { gap: 11px; padding-top: 11px; }
.g-nav .two > * { padding-left: 10px; }
.g-zoom .stack > *, .g-tools .stack > * { padding-left: 10px; padding-right: 0; }
.g-zoom .stack:first-child { width: 104px; }
.g-zoom .stack:nth-child(2) { width: 102px; }
.g-tools .stack:first-child { width: 142px; }
.g-zoom .marker { width: 165px; }
.g-zoom .marker > * { padding-left: 6px; }
.quick-bar {
    align-self: flex-end;
    width: 290px;
    height: 18px;
    margin: 0 22px 6px 10px;
    background: #555;
}
.quick-btns {
    display: grid;
    grid-template-columns: repeat(3, 18px);
    grid-auto-rows: 18px;
    gap: 20px 13px;
    padding-top: 17px;
}
.g-quick .group-label { padding-right: 10px; }

/* docked panels */
.workspace {
    flex: 1;
    display: grid;
    grid-template-columns: 2219fr 1047fr 544fr;
    column-gap: 5px;
    padding: 3px 20px 0 0;
}
.dock {
    grid-column: 2;
    display: flex;
    flex-direction: column;
    gap: 6px;
}
.side {
    display: flex;
    flex-direction: column;
    gap: 6px;
}
.upper { height: 764px; }
.lower {
    flex: 1;
    display: flex;
    gap: 6px;
}
.panel {
    display: flex;
    flex-direction: column;
    border: 2px solid #484848;
    border-top: none;
}
.panel-head {
    display: flex;
    align-items: center;
    gap: 14px;
    height: 26px;
    margin: 0 -2px 2px;
    padding: 0 8px;
    background: #505050;
    color: #8f8f8f;
}
.panel-head h2 {
    flex: 1;
    font-size: 14px;
    line-height: 16px;
}
.panel-head.active { background: #f98e0c; color: #5a3808; }
.segue-menu button {
    display: flex;
    align-items: center;
    justify-content: center;
    gap: 3px;
    width: 69px;
    height: 26px;
    border: 1px solid #4f4f4f;
    border-bottom: none;
}
.segue-menu .i8 { color: #a0a0a0; }
.wave {
    flex: 1;
    width: 1px;
    margin-left: 563px;
    background: repeating-linear-gradient(#8c1c14 0 5px, #4a2a28 5px 8px);
}
.segue-status {
    display: flex;
    align-items: center;
    height: 38px;
    padding: 4px 8px 0;
}
.segue-status > span { width: 485px; }
.segue-cmds { display: flex; gap: 18px; }
.segue-cmds button { display: flex; align-items: center; gap: 6px; }
.tabs {
    display: flex;
    height: 28px;
    margin: 0 3px 4px 0;
    background: #505050;
    color: #8f8f8f;
}
.tabs button {
    display: flex;
    align-items: center;
    gap: 5px;
    padding: 0 14px 0 12px;
    border-right: 2px solid #3c3c3c;
}
.tabs .active {
    background: #333;
    color: #f98e0c;
    padding-left: 17px;
}
.fill { flex: 1; }

/* directory explorer */
.explorer { flex: 705; }
.cartwall { flex: 336; }
.toolbar {
    display: flex;
    align-items: center;
    height: 34px;
    background: #505050;
    padding: 0 2px;
    font-size: 14px;
}
.toolbar .vsep { align-self: stretch; margin: 4px; background: #777; }
.toolbar button {
    display: flex;
    align-items: center;
    gap: 6px;
    height: 30px;
    padding: 0 6px;
}
.path {
    height: 38px;
    padding: 11px 7px;
    border-bottom: 2px solid #4a4a4a;
    font-weight: bold;
}
.crumbs {
    display: flex;
    align-items: center;
    gap: 10px;
    height: 28px;
    margin-top: 3px;
    padding: 0 3px;
    border: 1px solid #4a4a4a;
    border-bottom: 3px solid #4a4a4a;
}
.files {
    flex: 1;
    display: flex;
    position: relative;
    border-bottom: 2px solid #4f4f4f;
}
table {
    border-collapse: collapse;
    width: 100%;
}
th {
    height: 26px;
    padding: 0 6px;
    border-right: 1px solid #4f4f4f;
    border-bottom: 1px solid #4f4f4f;
    text-align: left;
    font-weight: normal;
}
td { padding: 0 6px; }
td svg { display: inline-block; vertical-align: middle; }
.files th:nth-child(2) { width: 155px; }
.files th:nth-child(3) { width: 123px; }
.files th.bar { width: 22px; border-right: none; }
.files td:first-child { padding-left: 4px; font-size: 14px; }
.files td:first-child svg:last-of-type { width: 18px; margin: 0 8px 0 4px; }
.files td:nth-child(3) { text-align: right; padding-right: 4px; }
.files .pad { display: inline-block; width: 16px; }
.selected { background: #686868; color: #fff; }
.scroll {
    position: absolute;
    right: 0;
    top: 27px;
    bottom: 0;
    width: 21px;
    padding: 8px 6px;
    background: #333;
    border-left: 1px solid #4a4a4a;
    display: flex;
    flex-direction: column;
    color: #777;
}
.thumb { height: 352px; margin: 6px 0 auto -1px; width: 10px; background: #666; }
.info {
    display: flex;
    align-items: center;
    height: 84px;
    padding: 0 4px;
    border-bottom: 2px solid #4a4a4a;
}
.noimg { width: 97px; color: #a8a8a8; }
.tags { flex: 1; }
.tags div { display: flex; height: 25px; align-items: center; }
.tags dt { width: 48px; color: #505050; }
.year { width: 71px; }
.nums { flex: none; width: 124px; }
.nums dt { width: 39px; }
.rate { margin-left: -9px; }
.selected-path { height: 34px; padding: 5px 6px; border-bottom: 2px solid #4f4f4f; font-size: 14px; }
.drives {
    display: flex;
    justify-content: flex-end;
    height: 48px;
    padding: 6px 2px 6px 0;
}
.drives button {
    display: flex;
    align-items: center;
    justify-content: center;
    width: 35px;
}
.drives .i20 { margin-top: 8px; }
.drives .current { border: 1px solid #4f4f4f; }

/* cartwall */
.cart-bar {
    display: flex;
    height: 24px;
    margin: 0 2px 1px;
    border: 1px solid #4f4f4f;
}
.cart-name { flex: 1; padding: 3px; }
.cart-bar button {
    display: flex;
    align-items: center;
    justify-content: center;
    min-width: 19px;
    padding: 0 2px;
    border-left: 1px solid #4f4f4f;
}
.cart-bar .edit { width: 29px; }
.cmds button { flex: auto; padding: 0; }
.carts {
    display: grid;
    grid-template-columns: repeat(auto-fill, 150px);
    gap: 6px 5px;
    padding: 5px 4px;
}
.cart {
    display: grid;
    grid-template-rows: 21px 1fr 22px;
    height: 124px;
    border: 2px solid #555;
    font-weight: bold;
    text-align: center;
}
.cart .num {
    width: 34px;
    border: 1px solid #606060;
    border-top: none;
    border-left: none;
    font-weight: normal;
    line-height: 20px;
}
.cart .day {
    display: flex;
    align-items: center;
    justify-content: center;
    padding-bottom: 3px;
}
.cart-foot {
    display: grid;
    grid-template-columns: 94px 1fr;
    border-top: 1px solid #606060;
    font-size: 14px;
    line-height: 21px;
}
.cart-foot button {
    display: flex;
    justify-content: center;
    align-items: center;
    border-left: 1px solid #606060;
}

/* mixer */
.strips { display: flex; padding: 0 1px 15px; height: 648px; gap: 2px; }
.strip {
    width: 84px;
    height: 633px;
    border: 2px solid #4a4a4a;
    display: flex;
    flex-direction: column;
    gap: 3px;
    padding-top: 1px;
    color: #a8a8a8;
}
.strip.split { margin-left: 15px; }
.strip.main { width: 72px; margin-left: 15px; }
.strip h3 {
    margin: 0;
    height: 28px;
    border: 1px solid #666;
    background: #333;
    color: #e0e0e0;
    font-size: 18px;
    line-height: 26px;
    text-align: center;
}
.strip.muted h3 { background: #8b0000; }
.dsp { display: flex; height: 22px; border: 1px solid #555; flex: none; }
.dsp button:first-child { flex: 1; }
.dsp button:last-child {
    width: 20px;
    background: #505050;
    display: flex;
    align-items: center;
    justify-content: center;
    color: #999;
}
.dsp .lit { background: #6495ed; color: #e8f0ff; }
.knobs {
    display: flex;
    justify-content: space-around;
    height: 57px;
    padding-top: 2px;
    border: 1px solid #666;
    font-size: 11px;
    line-height: 14px;
    flex: none;
    text-align: center;
}
.knob { display: grid; width: 36px; grid-template-rows: 16px 34px; }
.knob svg, .knob input { grid-row: 2; grid-column: 1; }
.knob svg { width: 36px; height: 36px; }
.knob input {
    appearance: none;
    width: 24px;
    height: 24px;
    margin: 7px 6px;
    border-radius: 50%;
    background: radial-gradient(circle at 40% 40%, #b8b8b8, #868686);
}
.knob input::-webkit-slider-thumb {
    appearance: none;
    width: 1px;
    height: 11px;
    margin-top: -13px;
    background: #444;
}
.pair { display: grid; grid-template-columns: 1fr 1fr; gap: 2px; height: 23px; flex: none; }
.pair button, .wide-btn { border: 1px solid #666; }
.pair .live { color: #f98e0c; border-color: #a3690f; }
.pair .mute { color: #b02a2a; }
.muted .pair .mute { background: #8b0000; color: #eee; border-color: #8b0000; }
.fader {
    flex: 1;
    display: grid;
    border: 1px solid #555;
    --cap: #ddd;
    --groove: #666;
    --mark: #32b832;
}
.fader.yellow { --cap: #eef79a; --groove: #7a7f3a; --mark: #2a9a2a; }
.fader.blue { --cap: #8ba3ef; --groove: #4f62a0; --mark: #4fc7b8; }
.fader svg, .fader input { grid-area: 1 / 1; }
.fader svg { width: 78px; height: 308px; overflow: visible; }
.fader text {
    fill: #b8b8b8;
    font-size: 10px;
    text-anchor: end;
}
.fader .lr { fill: #7d7766; font-size: 12px; text-anchor: middle; }
.fader input {
    appearance: none;
    writing-mode: vertical-lr;
    direction: rtl;
    justify-self: end;
    width: 18px;
    height: 292px;
    margin: 2px 8px 0 0;
    background: none;
}
.fader input::-webkit-slider-thumb {
    appearance: none;
    width: 18px;
    height: 31px;
    border: 2px solid var(--cap);
    background:
        linear-gradient(var(--mark), var(--mark)) center / 14px 2px no-repeat,
        conic-gradient(from 28deg, var(--cap) 124deg, transparent 0 180deg, var(--cap) 0 304deg, transparent 0),
        repeating-linear-gradient(var(--groove) 0 1px, var(--cap) 1px 3px);
}
.main .fader svg { width: 66px; }
.main .fader input { justify-self: start; margin-left: 15px; }
.main .fader text { font-size: 12px; fill: #a8a8a8; }
.slots { margin: 0; padding: 4px 4px 0; height: 122px; list-style: none; flex: none; }
.slots li { display: flex; gap: 4px; height: 25px; }
.slots i { flex: 1; height: 15px; border-bottom: 1px solid #a8a8a8; }
.wide-btn { height: 23px; flex: none; }
.wide-btn.tall { height: 57px; }

/* network */
.network { flex: 1; font-size: 14px; }
.network .tabs { font-size: 13px; }
.servers { flex: 1; margin: 0 1px; border: 1px solid #4f4f4f; }
.servers table { table-layout: fixed; }
.servers th { height: 24px; padding: 0 4px; font-size: 13px; }
.servers th:first-child { width: 160px; }
.servers th:nth-child(2) { width: 135px; }
.servers td { height: 23px; padding: 0 5px; white-space: nowrap; }
.servers td:first-child { padding: 0 0 0 1px; }
.servers td svg { margin: 0 1px; }
.servers td svg + svg { margin-right: 6px; }
.song {
    display: flex;
    align-items: center;
    justify-content: space-between;
    height: 35px;
    padding: 0 6px 0 12px;
}
.count {
    width: 35px;
    line-height: 25px;
    text-align: center;
    border: 1px solid #666;
    border-width: 0 1px;
}

/* status bar */
.status {
    display: flex;
    align-items: center;
    gap: 20px;
    height: 51px;
    padding: 0 20px 12px 37px;
}
.led { width: 11px; height: 11px; border-radius: 50%; background: #777; margin-right: 3px; }
.ready { flex: 1; }
.status .vsep { height: 24px; margin: 0 -8px 0 0; }
.grip { width: 14px; height: 14px; margin-top: 8px; margin-left: 3px; }
.taskbar { display: flex; height: 2px; background: #222; }
.task { width: 430px; margin-left: 60px; background: #f0f0f0; }
.task.dim { width: 60px; margin-left: 868px; background: #555; }
```
FILE: script.js
```js
const icon = (name, cls = 'i20') => `<svg class="${cls}"><use href="#${name}"/></svg>`;

// directory listing
const files = [
    ['BSW #15.mp3', '17.09.2020 20:53', '429.196'],
    ['BSW12_1', '18.04.2019 21:19'],
    ['BSW12_2', '18.04.2019 21:19'],
    ['BSW12_DJMix.mp3', '18.09.2020 12:59', '168.571'],
    ['Classics1', '01.05.2020 16:43'],
    ['Classics10', '18.04.2019 21:19'],
    ['Classics11', '18.04.2019 21:19'],
    ['Classics12', '18.04.2019 21:19']
];
const later = '18.04.2019 21:20';
[13, 14, 15, 2, 3, 4, 5, 6, 7, 8, 9].forEach(n => files.push(['Classics' + n, later]));
files.push(['Funk', later], ['FutureClassics', later], ['FutureClassics2', '22.05.2019 15:59'], ['High', '01.05.2020 16:43']);
[1, 10, 11, 12, 13, 14].forEach(n => files.push(['House' + n, later]));
files.push(['House15', '22.05.2019 14:40']);
[2, 3, 4, 5].forEach(n => files.push(['House' + n, later]));

document.getElementById('fileRows').innerHTML = files.map(([name, date, size], i) => {
    const lead = size ? '<span class="pad"></span>' + icon('file') : icon('expand', 'i16') + icon('folder');
    return `<tr${i === 0 ? ' class="selected"' : ''}><td>${lead}${name}</td><td>${date}</td><td>${size || ''}</td><td></td></tr>`;
}).join('');

// cartwall
const carts = [['MONDAY', '00:09'], ['TUESDAY', '00:03'], ['WEDNESDAY', '00:02'], ['THURSDAY', '00:04'], ['FRIDAY', '00:05'], ['SATURDAY', '00:04'], ['SUNDAY', '00:02']];
document.getElementById('carts').innerHTML = carts.map(([day, time], i) => `
    <div class="cart">
        <span class="num">${i + 1}</span>
        <span class="day">${day}</span>
        <div class="cart-foot"><span>${time}</span><button aria-label="Play ${day}"><svg width="12" height="14"><use href="#skip"/></svg></button></div>
    </div>`).join('');

// mixer
const dbMarks = [['dB', 17], [-3, 42], [-5, 66], [-6, 77], [-9, 111], [-10, 122], [-12, 142], [-15, 170], [-18, 195], [-20, 210], [-25, 240], [-30, 261], [-40, 282]];
const faderTicks = [42, 79, 111, 142, 170, 195, 216, 234, 249, 261, 269, 275, 280, 284, 287];

function meter(levels) {
    let s = '';
    for (let y = 18; y < 293; y += 3) s += `M20 ${y}h10M32 ${y}h10`;
    let out = `<path d="${s}" stroke="#606060" stroke-width="2"/>`;
    out += dbMarks.map(([t, y]) => `<path d="M20 ${y}h22" stroke="#777"/><text x="16" y="${y + 4}">${t}</text>`).join('');
    out += `<path d="M60 17v275" stroke="#999" stroke-width="3"/><path d="M48 17h25M48 292h25" stroke="#777"/>`;
    out += `<path d="${faderTicks.map(y => `M50 ${y}h7M62 ${y}h7`).join('')}" stroke="#777"/>`;
    out += levels.map(([y, h]) => `<path d="M20 ${y}h10v${h}H20zM32 ${y}h10v${h}H32z" fill="#9db4ea"/>`).join('');
    return out + '<text class="lr" x="24" y="307">L</text><text class="lr" x="36" y="307">R</text>';
}

function knob(label) {
    let t = '';
    for (let a = -140; a <= 140; a += 28) {
        const r = a * Math.PI / 180, x = Math.sin(r), y = -Math.cos(r);
        t += `M${18 + x * 14} ${19 + y * 14}L${18 + x * 17} ${19 + y * 17}`;
    }
    return `<label class="knob">${label}<svg viewBox="0 0 36 36"><path d="${t}" stroke="#999"/></svg><input type="range" aria-label="${label}"></label>`;
}

const dsps = ['DSP 4', 'DSP 3', 'COMP', 'DSP 2', 'EQ', 'DSP 1', 'AGC'];
const dsp = (name, lit) => `<div class="dsp"><button${lit ? ' class="lit"' : ''}>${name}</button><button aria-label="${name} menu">${icon('caret', 'i8')}</button></div>`;

const channels = [
    { name: 'PLAY', lit: [], levels: [] },
    { name: 'OUT', lit: ['DSP 2', 'DSP 1'], levels: [[291, 3]] },
    { name: 'PFL', lit: [], levels: [] },
    { name: 'MIC1', lit: ['COMP', 'AGC'], levels: [[279, 1], [289, 5]], muted: true, split: true },
    { name: 'LINE', lit: [], levels: [[287, 7]], muted: true }
];

let html = channels.map(c => `
    <div class="strip${c.muted ? ' muted' : ''}${c.split ? ' split' : ''}">
        <h3>${c.name}</h3>
        ${dsps.map(d => dsp(d, c.lit.includes(d))).join('')}
        <div class="knobs">${knob('Pan')}${knob('Gain')}</div>
        <div class="pair"><button class="live">ON</button><button class="mute">M</button></div>
        <div class="fader${c.muted ? ' yellow' : ''}"><svg>${meter(c.levels)}</svg><input type="range" value="100" aria-label="${c.name} volume"></div>
        <div class="pair"><button>SND</button><button>REC</button></div>
    </div>`).join('');

const mainMarks = [[0, 17], [-3, 42], [-6, 78], [-9, 111], [-12, 142], [-15, 170], [-18, 195], [-21, 216], [-24, 234], [-30, 260], [-90, 292]];
html += `
    <div class="strip main">
        <h3>Main</h3>
        <ol class="slots">${[1, 2, 3, 4, 5].map(n => `<li>${n}.<i></i></li>`).join('')}</ol>
        ${dsp('SET...')}${dsp('RCM', true)}
        <button class="wide-btn tall">Mixer</button>
        <button class="wide-btn">TalkUser</button>
        <div class="fader blue"><svg><path d="M23 17v275" stroke="#999" stroke-width="3"/>
            ${mainMarks.map(([t, y]) => `<path d="M11 ${y}h9M26 ${y}h4" stroke="#888"/><text x="60" y="${y + 5}">${t}dB</text>`).join('')}
        </svg><input type="range" value="100" aria-label="Main volume"></div>
        <button class="wide-btn">TalkOver</button>
    </div>`;
document.getElementById('strips').innerHTML = html;
```
